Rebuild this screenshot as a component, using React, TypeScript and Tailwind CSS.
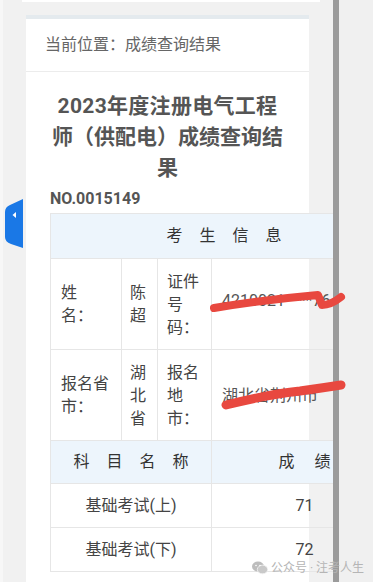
import React from "react";

const font = { fontFamily: "Roboto, 'Noto Sans CJK SC', sans-serif" };

function Spread({ chars, gap }: { chars: string[]; gap: string }) {
  return (
    <span className={`inline-flex ${gap}`}>
      {chars.map((c, i) => (
        <span key={i}>{c}</span>
      ))}
    </span>
  );
}

export default function App() {
  return (
    <div
      className="relative w-[373px] h-[582px] overflow-hidden bg-[#f1f1f1] flex"
      style={font}
    >
      <div className="w-[333px] h-full overflow-hidden border-l-[3px] border-[#f7f7f7] shrink-0">
        <div className="ml-[19px] w-[298px] h-[2px] bg-white" />
        <div className="mt-[13px] ml-[23px] w-[283px] bg-white border-t-4 border-[#e4eaee] h-[600px]">
          <div className="h-[53px] flex items-center pl-[19px] border-b border-[#ececec] text-[16px] text-[#666]">
            当前位置：成绩查询结果
          </div>
          <div className="pt-[19px] px-[20px] text-center text-[21px] leading-[31px] font-bold text-[#555]">
            <span className="tracking-[0.3px]">2023年度注册电气工程</span>
            <br />
            师（供配电）成绩查询结
            <br />
            果
          </div>
          <div className="mt-[5px] pl-[24px] text-[16px] leading-[20px] font-bold text-[#555]">
            NO.0015149
          </div>
          <div className="mt-[4px] ml-[24px] w-[348px] border-l border-t border-[#e6e6e6] text-[16px] text-[#444]">
            <div className="h-[45px] flex items-center justify-center bg-[#edf5fc] border-r border-b border-[#e6e6e6] text-[#333]">
              <Spread chars={["考", "生", "信", "息"]} gap="gap-[17px]" />
            </div>
            <div className="h-[91px] flex border-b border-[#e6e6e6] leading-[23px]">
              <div className="w-[71px] border-r border-[#e6e6e6] flex items-center pl-[10px]">
                <div>姓<br />名：</div>
              </div>
              <div className="w-[36px] border-r border-[#e6e6e6] flex items-center pl-[8px]">
                <div>陈<br />超</div>
              </div>
              <div className="w-[54px] border-r border-[#e6e6e6] flex items-center pl-[9px]">
                <div>证件<br />号<br />码：</div>
              </div>
              <div className="flex-1 border-r border-[#e6e6e6] flex items-center pl-[10px] pb-[8px] text-[#555]">
                4210021****76
              </div>
            </div>
            <div className="h-[91px] flex border-b border-[#e6e6e6] leading-[23px]">
              <div className="w-[71px] border-r border-[#e6e6e6] flex items-center pl-[10px]">
                <div>报名省<br />市：</div>
              </div>
              <div className="w-[36px] border-r border-[#e6e6e6] flex items-center pl-[8px]">
                <div>湖<br />北<br />省</div>
              </div>
              <div className="w-[54px] border-r border-[#e6e6e6] flex items-center pl-[9px]">
                <div>报名<br />地<br />市：</div>
              </div>
              <div className="flex-1 border-r border-[#e6e6e6] flex items-center pl-[10px] text-[#555]">
                湖北省荆州市
              </div>
            </div>
            <div className="h-[43px] flex bg-[#edf5fc] border-b border-[#e6e6e6] text-[#333]">
              <div className="w-[161px] border-r border-[#e6e6e6] flex items-center justify-center">
                <Spread chars={["科", "目", "名", "称"]} gap="gap-[17px]" />
              </div>
              <div className="flex-1 border-r border-[#e6e6e6] flex items-center justify-center">
                <Spread chars={["成", "绩"]} gap="gap-[20px]" />
              </div>
            </div>
            <div className="h-[44px] flex border-b border-[#e6e6e6]">
              <div className="w-[161px] border-r border-[#e6e6e6] flex items-center justify-center">
                基础考试(上)
              </div>
              <div className="flex-1 border-r border-[#e6e6e6] flex items-center justify-center">
                71
              </div>
            </div>
            <div className="h-[44px] flex border-b border-[#e6e6e6]">
              <div className="w-[161px] border-r border-[#e6e6e6] flex items-center justify-center">
                基础考试(下)
              </div>
              <div className="flex-1 border-r border-[#e6e6e6] flex items-center justify-center">
                72
              </div>
            </div>
          </div>
        </div>
      </div>
      <div className="w-[6px] h-full bg-[#9b9b9b] shrink-0" />
      <div className="flex-1 h-full bg-[#f0f0f0]" />

      {/* red scribbles */}
      <svg className="absolute left-0 top-0" width="373" height="582" viewBox="0 0 373 582">
        <path
          d="M214 308 Q262 300 318 295 L322 305 Q331 305 341 297"
          stroke="#e8483f"
          strokeWidth="8"
          fill="none"
          strokeLinecap="round"
          strokeLinejoin="round"
        />
        <path
          d="M226 405 Q270 394 300 391 Q322 388 341 385"
          stroke="#e8483f"
          strokeWidth="9"
          fill="none"
          strokeLinecap="round"
        />
      </svg>

      {/* blue side tab */}
      <svg className="absolute left-[5px] top-[199px]" width="19" height="50" viewBox="0 0 19 50">
        <path d="M18 0 L18 49 L6 45 Q0 43 0 38 L0 13 Q0 8 5 6 Z" fill="#1a78e6" />
        <path d="M11 13 L11 19 L7.5 16 Z" fill="#ffffff" />
      </svg>

      {/* watermark */}
      <div className="absolute left-[252px] top-[559px] flex items-center gap-[3px] text-[12px] text-[#b5b5b5]">
        <svg width="16" height="14" viewBox="0 0 16 14">
          <ellipse cx="6" cy="5.5" rx="6" ry="5" fill="#bdbdbd" />
          <ellipse cx="10.5" cy="8.5" rx="5.2" ry="4.3" fill="#c9c9c9" stroke="#f4f4f4" strokeWidth="0.8" />
          <circle cx="4" cy="4.5" r="0.8" fill="#fff" />
          <circle cx="8" cy="4.5" r="0.8" fill="#fff" />
        </svg>
        <span>公众号 · 注考人生</span>
      </div>
    </div>
  );
}
